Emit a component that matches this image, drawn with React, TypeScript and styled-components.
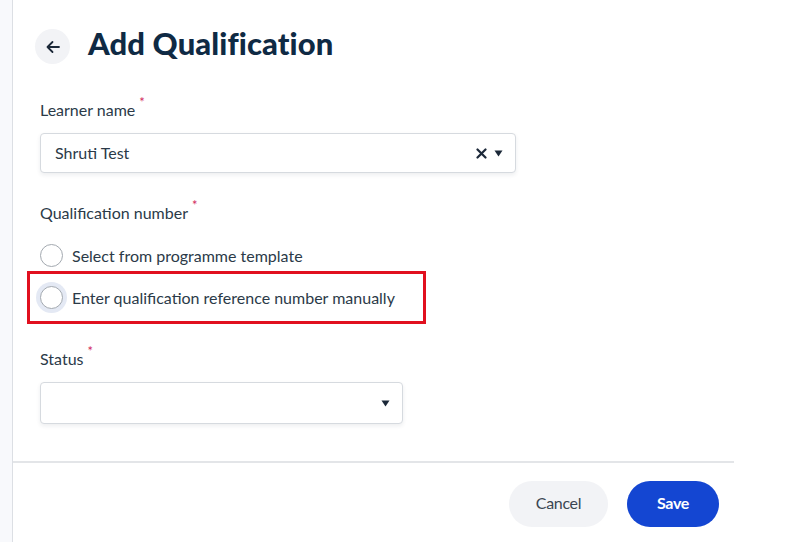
import React from "react";
import styled, { createGlobalStyle } from "styled-components";

const GlobalStyle = createGlobalStyle`
  html, body { margin: 0; padding: 0; }
  body {
    background: #f8f9fc;
    font-family: Lato, "Open Sans", Arial, sans-serif;
    color: #2b3a48;
  }
  * { box-sizing: border-box; }
`;

const Page = styled.div`
  display: flex;
  height: 542px;
  width: 800px;
  overflow: hidden;
`;

const Gutter = styled.div`
  width: 12px;
  flex: none;
  background: #f8f9fc;
`;

const Panel = styled.main`
  flex: 1;
  background: #ffffff;
  border-left: 1px solid #dcdfe4;
  display: flex;
  flex-direction: column;
`;

const Header = styled.header`
  display: flex;
  align-items: center;
  gap: 18px;
  padding: 29px 0 0 22px;
  height: 64px;
`;

const BackButton = styled.button`
  width: 35px;
  height: 35px;
  border-radius: 50%;
  border: none;
  background: #f2f3f6;
  display: flex;
  align-items: center;
  justify-content: center;
  padding: 0;
  color: #1b2838;
`;

const Title = styled.h1`
  margin: -6px 0 0 0;
  font-family: Lato, Arial, sans-serif;
  font-weight: 900;
  font-size: 31px;
  letter-spacing: 0.1px;
  color: #0f2a44;
  line-height: 35px;
`;

const Form = styled.div`
  display: flex;
  flex-direction: column;
  padding: 36px 0 0 27px;
`;

const Field = styled.div<{ $mb: number }>`
  display: flex;
  flex-direction: column;
  margin-bottom: ${(p) => p.$mb}px;
`;

const Label = styled.label`
  font-size: 16px;
  line-height: 20px;
  color: #2b3a48;
  display: flex;
  align-items: flex-start;
  gap: 4px;
`;

const Required = styled.span`
  color: #d1295c;
  font-size: 13px;
  line-height: 12px;
  margin-top: -4px;
`;

const SelectBox = styled.div<{ $w: number; $h: number; $mt: number }>`
  width: ${(p) => p.$w}px;
  height: ${(p) => p.$h}px;
  margin-top: ${(p) => p.$mt}px;
  border: 1px solid #d6dadf;
  border-radius: 4px;
  background: #fff;
  box-shadow: 0 2px 4px rgba(30, 40, 60, 0.08);
  display: flex;
  align-items: center;
  padding: 0 12px 0 14px;
`;

const Value = styled.span`
  flex: 1;
  font-size: 16px;
  color: #2b3a48;
  margin-top: -2px;
`;

const Icons = styled.span`
  display: flex;
  align-items: center;
  gap: 7px;
  color: #1b2838;
`;

const RadioGroup = styled.div`
  display: flex;
  flex-direction: column;
  gap: 20px;
  margin-top: 21px;
`;

const RadioRow = styled.div`
  display: flex;
  align-items: center;
  gap: 9px;
  height: 22px;
  font-size: 16px;
  color: #2b3a48;
`;

const RadioCircle = styled.span<{ $focus?: boolean }>`
  width: 23px;
  height: 23px;
  border-radius: 50%;
  border: 1px solid #a3a9b0;
  background: #fff;
  flex: none;
  box-shadow: ${(p) => (p.$focus ? "0 0 0 4px #e4e9f4" : "none")};
`;

const Highlight = styled.div`
  margin: -15px 0 -16px -13px;
  padding: 12px 0 13px 10px;
  width: 399px;
  border: 3px solid #e1101f;
`;

const Divider = styled.hr`
  margin: 37px 0 0 0;
  width: 721px;
  border: none;
  border-top: 2px solid #e3e5e8;
`;

const Footer = styled.footer`
  display: flex;
  justify-content: flex-end;
  gap: 19px;
  width: 721px;
  padding: 18px 15px 0 0;
`;

const PillButton = styled.button<{ $primary?: boolean; $w: number }>`
  height: 46px;
  width: ${(p) => p.$w}px;
  border-radius: 23px;
  border: none;
  font-family: Lato, Arial, sans-serif;
  font-size: 16px;
  letter-spacing: -0.3px;
  font-weight: ${(p) => (p.$primary ? 700 : 400)};
  background: ${(p) => (p.$primary ? "#1446d2" : "#f2f3f6")};
  color: ${(p) => (p.$primary ? "#ffffff" : "#3a4652")};
  padding: 0 0 4px 0;
`;

const Caret = () => (
  <svg width="9" height="7" viewBox="0 0 9 7">
    <path d="M0.5 0.5h8L4.5 6.5z" fill="#1b2838" />
  </svg>
);

export default function App() {
  return (
    <>
      <GlobalStyle />
      <Page>
        <Gutter />
        <Panel>
          <Header>
            <BackButton aria-label="Back">
              <svg width="16" height="16" viewBox="0 0 16 16" fill="none">
                <path
                  d="M14 8H2.5M7.5 3L2.5 8l5 5"
                  stroke="#1b2838"
                  strokeWidth="1.8"
                  strokeLinecap="round"
                  strokeLinejoin="round"
                />
              </svg>
            </BackButton>
            <Title>Add Qualification</Title>
          </Header>
          <Form>
            <Field $mb={30}>
              <Label>
                Learner name<Required>*</Required>
              </Label>
              <SelectBox $w={476} $h={40} $mt={13}>
                <Value>Shruti Test</Value>
                <Icons>
                  <svg width="11" height="11" viewBox="0 0 11 11">
                    <path
                      d="M1.5 1.5l8 8M9.5 1.5l-8 8"
                      stroke="#1b2838"
                      strokeWidth="2.2"
                      strokeLinecap="round"
                    />
                  </svg>
                  <Caret />
                </Icons>
              </SelectBox>
            </Field>
            <Field $mb={41}>
              <Label>
                Qualification number<Required>*</Required>
              </Label>
              <RadioGroup>
                <RadioRow>
                  <RadioCircle />
                  Select from programme template
                </RadioRow>
                <Highlight>
                  <RadioRow>
                    <RadioCircle $focus />
                    Enter qualification reference number manually
                  </RadioRow>
                </Highlight>
              </RadioGroup>
            </Field>
            <Field $mb={0}>
              <Label>
                Status<Required>*</Required>
              </Label>
              <SelectBox $w={363} $h={42} $mt={13}>
                <Value />
                <Icons>
                  <Caret />
                </Icons>
              </SelectBox>
            </Field>
          </Form>
          <Divider />
          <Footer>
            <PillButton $w={99}>Cancel</PillButton>
            <PillButton $primary $w={92}>
              Save
            </PillButton>
          </Footer>
        </Panel>
      </Page>
    </>
  );
}
